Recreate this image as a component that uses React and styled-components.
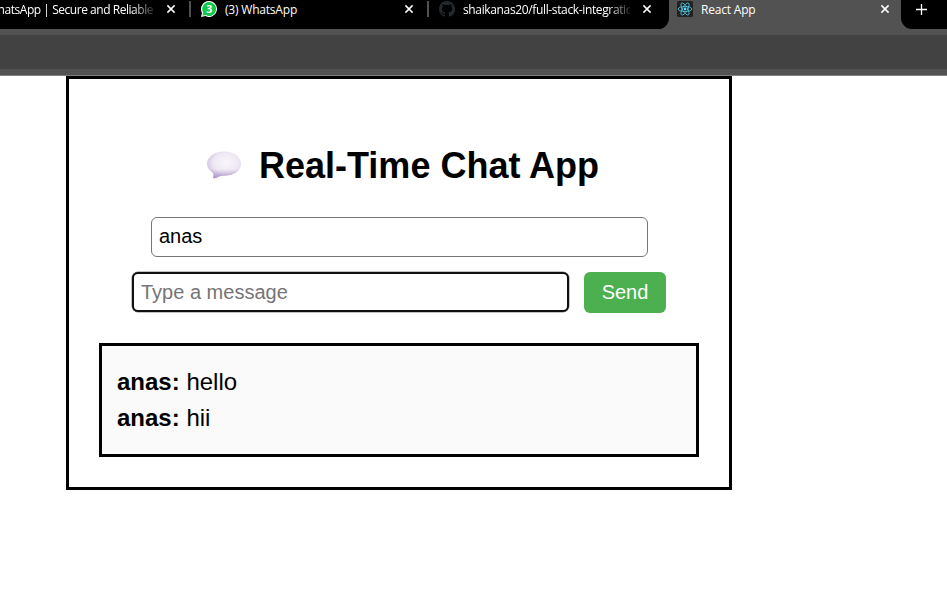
import React from 'react';
import styled, { createGlobalStyle } from 'styled-components';

const GlobalStyle = createGlobalStyle`
  * { box-sizing: border-box; }
  html, body { margin: 0; height: 100%; background: #fff; overflow: hidden; }
  body { font-family: "Liberation Sans", Arial, sans-serif; color: #000; }
`;

const Browser = styled.header`
  height: 76px;
  background: #525252;
  border-bottom: 1px solid #808080;
  overflow: hidden;
`;

const TabStrip = styled.div`
  display: flex;
  height: 29px;
  margin-bottom: 6px;
`;

const InactiveTabs = styled.div`
  display: flex;
  flex: none;
  justify-content: flex-end;
  width: 669px;
  padding-right: 2px;
  overflow: hidden;
  background: #000;
  border-bottom-right-radius: 11px;
`;

const Tab = styled.div`
  display: flex;
  flex: none;
  align-items: flex-start;
  width: ${(p) => (p.$active ? 232 : 238)}px;
  height: 29px;
  padding-top: 1px;
  padding-left: ${(p) => (p.$active ? 8 : 10)}px;
  background: ${(p) => (p.$active ? '#525252' : '#000')};
`;

const TabIcon = styled.svg`
  flex: none;
  width: 16px;
  height: 16px;
  margin-right: 8px;
`;

const TabTitle = styled.span`
  flex: none;
  width: 167px;
  height: 18px;
  overflow: hidden;
  white-space: nowrap;
  color: #fff;
  font: 12px/17px "Open Sans", "Noto Sans", sans-serif;
  letter-spacing: ${(p) => p.$spacing || 0}px;
  ${(p) => p.$fade && 'mask-image: linear-gradient(to right, #000 87%, transparent 102%);'}
`;

const CloseIcon = styled.svg`
  flex: none;
  width: 10px;
  height: 10px;
  margin: 3px 0 0 12px;
  stroke: #fff;
  stroke-width: 1.5;
`;

const Divider = styled.i`
  flex: none;
  width: 2px;
  height: 16px;
  margin-left: auto;
  background: #505050;
`;

const NewTab = styled.div`
  flex: 1;
  padding: 4px 0 0 15px;
  line-height: 0;
  background: #000;
  border-bottom-left-radius: 11px;
`;

const Toolbar = styled.div`
  height: 34px;
  background: #424242;
`;

const ChatCard = styled.main`
  display: flex;
  flex-direction: column;
  width: 666px;
  height: 414px;
  margin-left: 66px;
  padding: 60px 30px 30px;
  border: 3px solid #000;
`;

const Heading = styled.h1`
  display: flex;
  align-items: center;
  height: 54px;
  margin: 0 0 24px;
  padding-left: 107px;
  font-size: 36px;
  line-height: 54px;
  white-space: nowrap;
`;

const Bubble = styled.svg`
  width: 36px;
  height: 30px;
  margin: 0 17px 2px 0;
`;

const NameInput = styled.input`
  width: 497px;
  height: 40px;
  margin: 0 0 15px 52px;
  padding: 0 7px 2px;
  border: 1px solid #767676;
  border-radius: 6px;
  outline: none;
  font: 20px "Liberation Sans", Arial, sans-serif;
  color: #000;
`;

const Composer = styled.div`
  display: flex;
  gap: 15px;
  height: 41px;
  margin: 0 0 30px 33px;
`;

const MessageInput = styled.input`
  width: 437px;
  height: 40px;
  padding: 0 7px;
  border: 2px solid #101010;
  border-radius: 6px;
  box-shadow: 0 0 0 0.5px rgba(16, 16, 16, 0.5);
  outline: none;
  font: 20px "Liberation Sans", Arial, sans-serif;
  &::placeholder { color: #757575; opacity: 1; }
`;

const SendButton = styled.button`
  width: 82px;
  height: 41px;
  padding: 0;
  border: 0;
  border-radius: 6px;
  background: #4caf50;
  color: #fff;
  font: 20px "Liberation Sans", Arial, sans-serif;
`;

const Messages = styled.section`
  height: 114px;
  padding: 18px 15px;
  border: 3px solid #000;
  background: #fafafa;
`;

const Message = styled.p`
  margin: 0;
  font-size: 24px;
  line-height: 36px;
`;

const Close = () => (
  <CloseIcon viewBox="0 0 10 10"><path d="M1.4 1.4l7.2 7.2M8.6 1.4L1.4 8.6" /></CloseIcon>
);

const WhatsAppIcon = () => (
  <TabIcon viewBox="0 0 16 16">
    <path d="M8 0a8 8 0 1 1-3.7 15.1L0 16l1-4.1A8 8 0 0 1 8 0z" fill="#fff" />
    <path d="M8.1 1.1a6.9 6.9 0 1 1-3.5 12.8l-3.1.8.8-3A6.9 6.9 0 0 1 8.1 1.1z" fill="#12c848" />
    <text x="8.2" y="12" textAnchor="middle" fontFamily="Open Sans, sans-serif" fontWeight="700" fontSize="10.5" fill="#fff">3</text>
  </TabIcon>
);

const GitHubIcon = () => (
  <TabIcon viewBox="0 0 16 16">
    <path fill="#24292f" d="M8 0C3.58 0 0 3.58 0 8c0 3.54 2.29 6.53 5.47 7.59.4.07.55-.17.55-.38 0-.19-.01-.82-.01-1.49-2.01.37-2.53-.49-2.69-.94-.09-.23-.48-.94-.82-1.13-.28-.15-.68-.52-.01-.53.63-.01 1.08.58 1.23.82.72 1.21 1.87.87 2.33.66.07-.52.28-.87.51-1.07-1.78-.2-3.64-.89-3.64-3.95 0-.87.31-1.59.82-2.15-.08-.2-.36-1.02.08-2.12 0 0 .67-.21 2.2.82.64-.18 1.32-.27 2-.27s1.36.09 2 .27c1.53-1.04 2.2-.82 2.2-.82.44 1.1.16 1.92.08 2.12.51.56.82 1.27.82 2.15 0 3.07-1.87 3.75-3.65 3.95.29.25.54.73.54 1.48 0 1.07-.01 1.93-.01 2.2 0 .21.15.46.55.38A8.01 8.01 0 0 0 16 8c0-4.42-3.58-8-8-8z" />
  </TabIcon>
);

const ReactIcon = () => (
  <TabIcon viewBox="0 0 16 16">
    <rect width="16" height="16" rx="1.5" fill="#222" />
    <g fill="none" stroke="#53bfdc" strokeWidth=".85">
      <ellipse cx="8" cy="8" rx="6.8" ry="2.6" />
      <ellipse cx="8" cy="8" rx="6.8" ry="2.6" transform="rotate(60 8 8)" />
      <ellipse cx="8" cy="8" rx="6.8" ry="2.6" transform="rotate(120 8 8)" />
    </g>
    <circle cx="8" cy="8" r="1.4" fill="#61dafb" />
  </TabIcon>
);

const SpeechBubble = () => (
  <Bubble viewBox="0 0 36 30">
    <defs>
      <radialGradient id="bubbleFill" cx=".56" cy=".42" r=".62">
        <stop offset="0" stopColor="#f9f6fb" />
        <stop offset=".6" stopColor="#eee8f4" />
        <stop offset="1" stopColor="#cdbfdf" />
      </radialGradient>
      <linearGradient id="bubbleShade" x1="0" y1="0" x2="0" y2="1">
        <stop offset=".65" stopColor="#a78fc5" stopOpacity="0" />
        <stop offset="1" stopColor="#967bb9" stopOpacity=".7" />
      </linearGradient>
    </defs>
    {['url(#bubbleFill)', 'url(#bubbleShade)'].map((fill) => (
      <path key={fill} fill={fill} d="M18 1.600C27.500 1.600 35 7 35 14s-7.500 11.500-17 11.700c-2 0-3.500.2-5 .8-1.800.9-3.600 1.800-5.900 1.800.5-1.800.5-3.800-.2-5.600C3.500 20.800 1 17.600 1 14 1 7 8.500 1.600 18 1.600z" />
    ))}
  </Bubble>
);

const messages = [
  { id: 1, name: 'anas', text: 'hello' },
  { id: 2, name: 'anas', text: 'hii' },
];

export default function App() {
  return (
    <>
      <GlobalStyle />
      <Browser>
        <TabStrip>
          <InactiveTabs>
            <Tab>
              <WhatsAppIcon />
              <TabTitle $fade $spacing={-0.46}>WhatsApp | Secure and Reliable</TabTitle>
              <Close /><Divider />
            </Tab>
            <Tab>
              <WhatsAppIcon />
              <TabTitle $spacing={-0.2}>(3) WhatsApp</TabTitle>
              <Close /><Divider />
            </Tab>
            <Tab>
              <GitHubIcon />
              <TabTitle $fade $spacing={-0.36}>shaikanas20/full-stack-integration</TabTitle>
              <Close />
            </Tab>
          </InactiveTabs>
          <Tab $active>
            <ReactIcon />
            <TabTitle $spacing={-0.2}>React App</TabTitle>
            <Close />
          </Tab>
          <NewTab>
            <svg width="11" height="11" viewBox="0 0 11 11">
              <path d="M5.500 0v11M0 5.500h11" stroke="#fff" strokeWidth="1.300" />
            </svg>
          </NewTab>
        </TabStrip>
        <Toolbar />
      </Browser>
      <ChatCard>
        <Heading><SpeechBubble />Real-Time Chat App</Heading>
        <NameInput defaultValue="anas" />
        <Composer>
          <MessageInput placeholder="Type a message" />
          <SendButton>Send</SendButton>
        </Composer>
        <Messages>
          {messages.map((m) => (
            <Message key={m.id}><b>{m.name}:</b> {m.text}</Message>
          ))}
        </Messages>
      </ChatCard>
    </>
  );
}
